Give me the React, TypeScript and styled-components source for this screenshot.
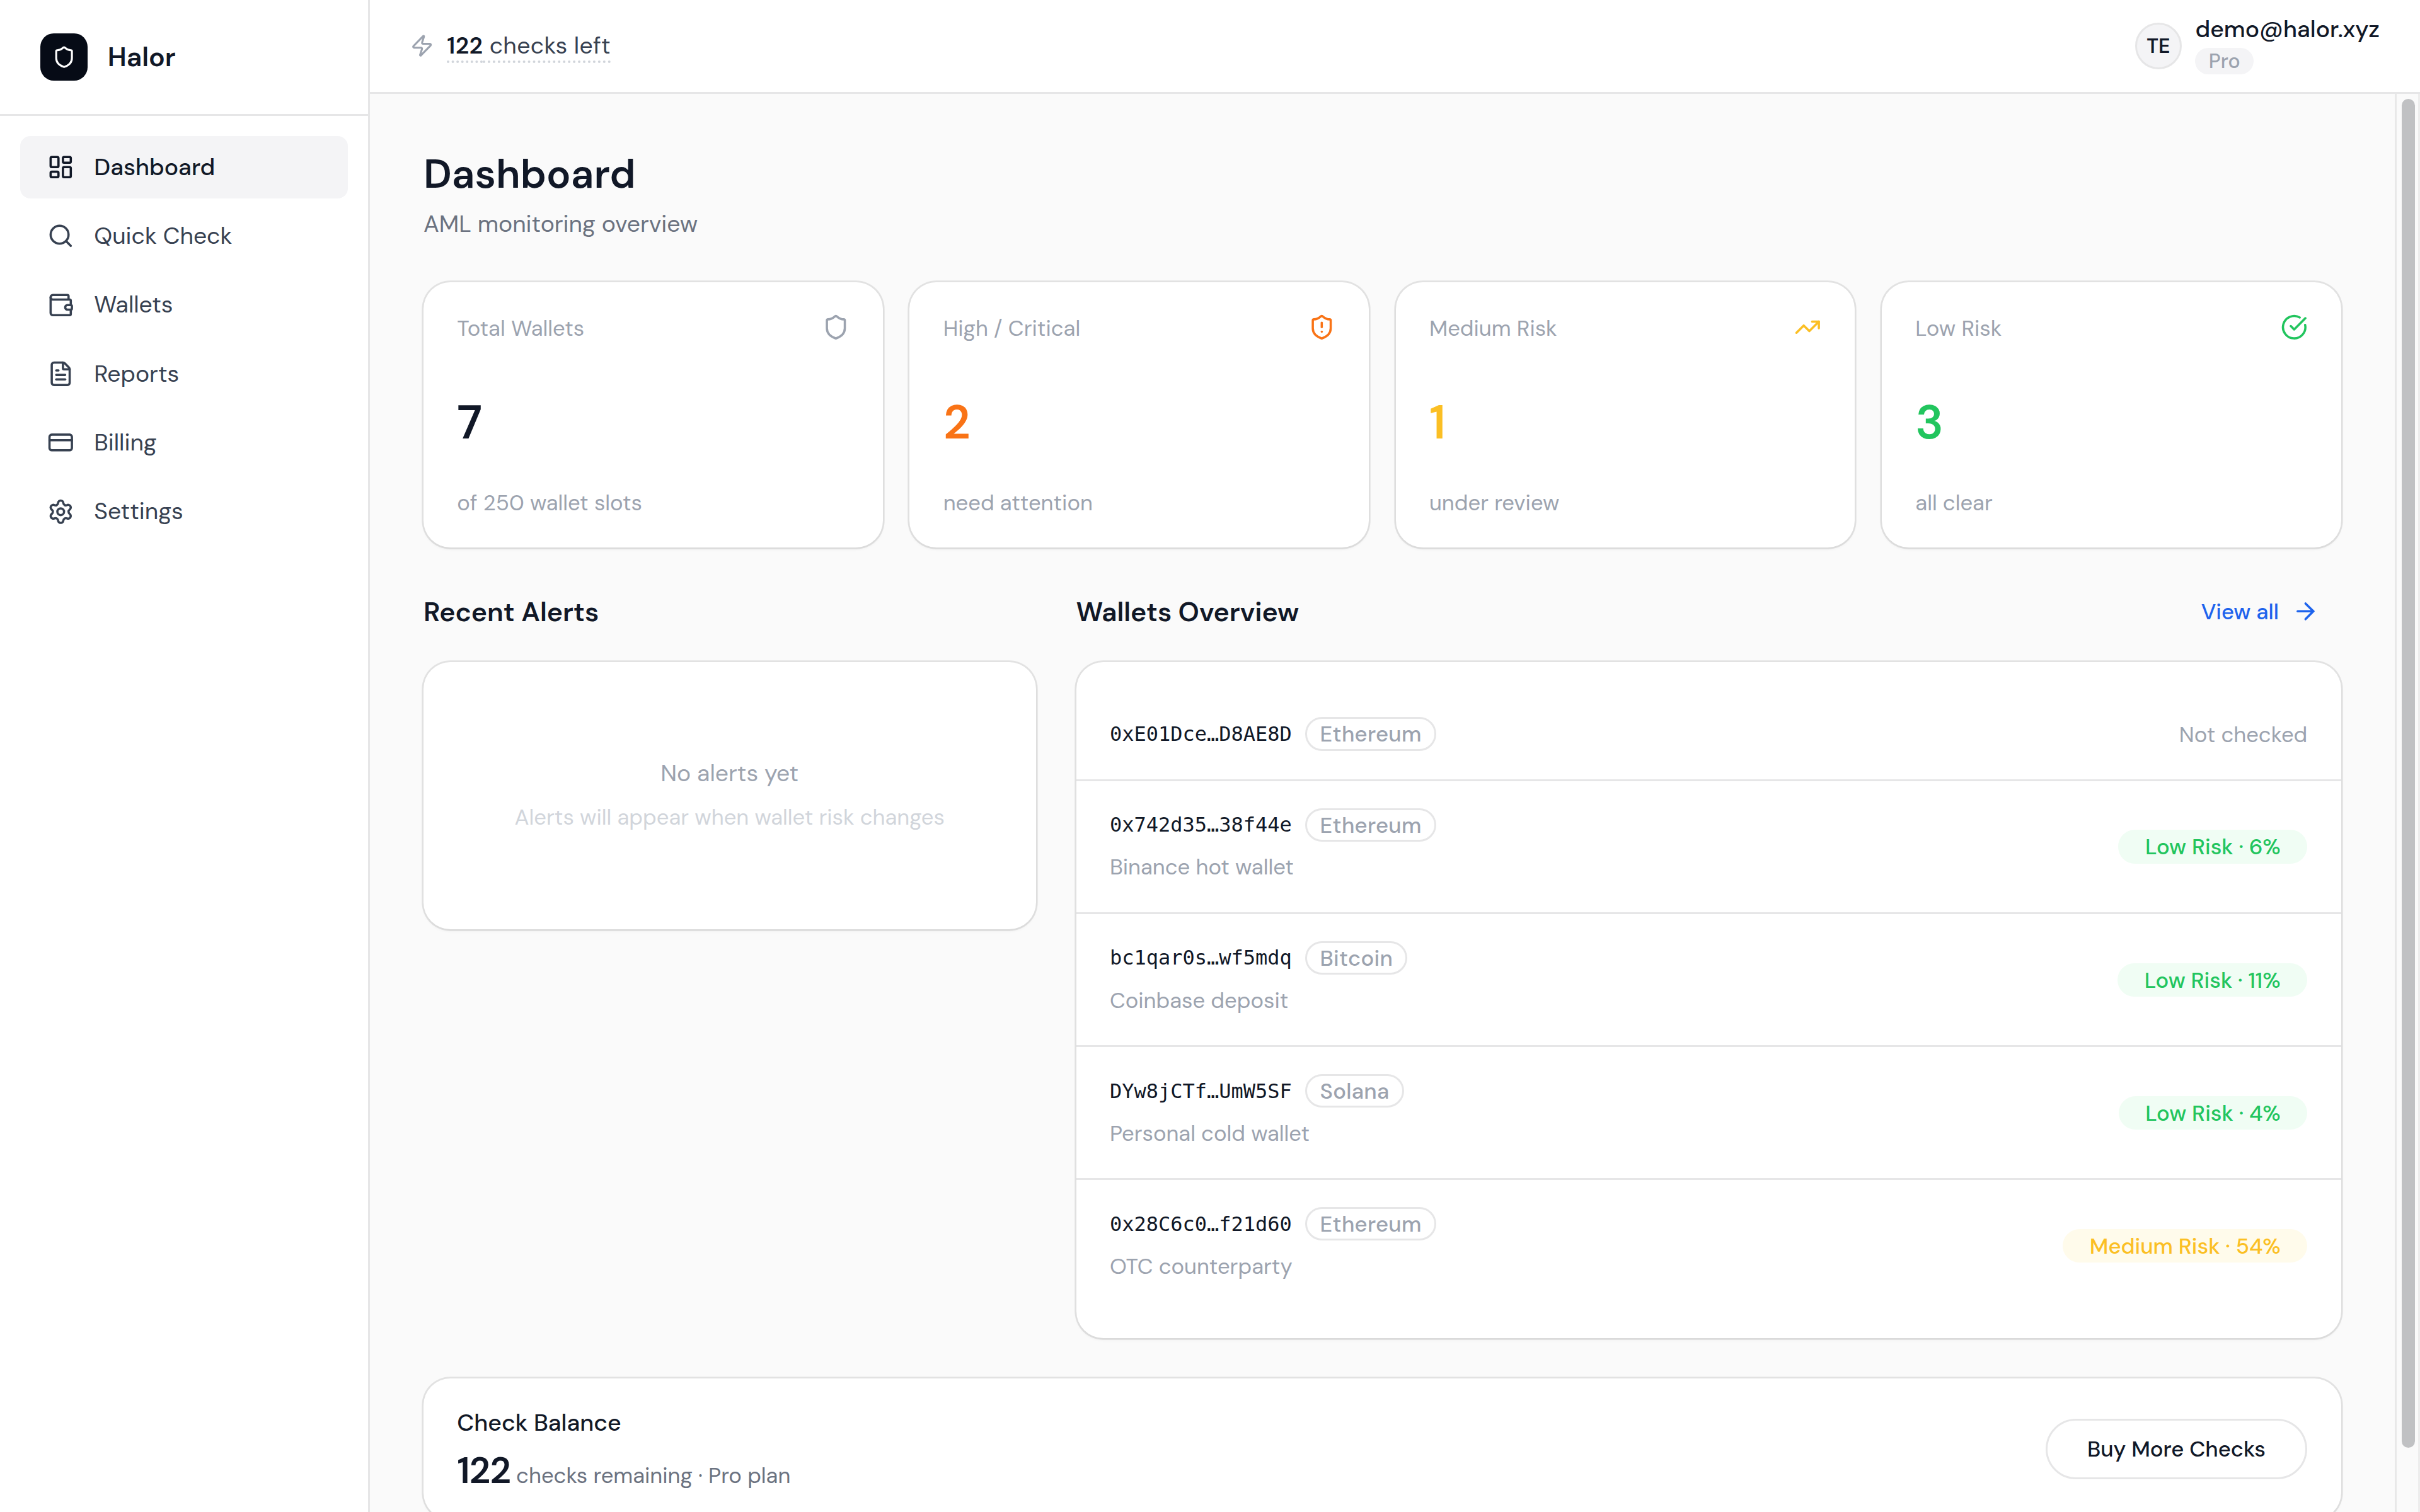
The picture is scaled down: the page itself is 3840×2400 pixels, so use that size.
import React from 'react';
import styled, { createGlobalStyle, css } from 'styled-components';
import {
  ArrowRight,
  CircleCheckBig,
  CreditCard,
  FileText,
  LayoutDashboard,
  Search,
  Settings,
  Shield,
  ShieldAlert,
  TrendingUp,
  Wallet,
  Zap,
} from 'lucide-react';

const ink = '#111827';
const body = '#374151';
const soft = '#6b7280';
const muted = '#9ca3af';
const faint = '#d1d5db';
const line = '#e6e6e7';
const fill = '#f4f4f6';

const GlobalStyle = createGlobalStyle`
  *, *::before, *::after { box-sizing: border-box; }
  body {
    margin: 0;
    background: #fff;
    color: ${ink};
    font-family: "DM Sans", Inter, sans-serif;
    overflow: hidden;
  }
  h1, h2, p { margin: 0; }
  button { font-family: inherit; }
  svg { display: block; flex: none; }
`;

const Shell = styled.div`
  display: flex;
  width: 3840px;
  height: 2400px;
  overflow: hidden;
`;

/* Sidebar */

const Sidebar = styled.aside`
  flex: none;
  width: 586.67px;
  background: #fff;
  border-right: 3px solid ${line};
`;

const Brand = styled.div`
  display: flex;
  align-items: center;
  gap: 32px;
  height: 184px;
  padding: 0 64px;
  border-bottom: 3px solid ${line};
  font-size: 42.67px;
  font-weight: 600;
`;

const BrandMark = styled.div`
  display: grid;
  place-items: center;
  width: 74.67px;
  height: 74.67px;
  border-radius: 21.33px;
  background: #060b16;
  color: #fff;
`;

const Nav = styled.nav`
  display: flex;
  flex-direction: column;
  gap: 10.67px;
  padding: 32px;
`;

const NavItem = styled.a<{ $active?: boolean }>`
  display: flex;
  align-items: center;
  gap: 32px;
  height: 98.67px;
  padding: 0 42.67px;
  border-radius: 16px;
  font-size: 37.33px;
  font-weight: 400;
  color: ${body};
  ${(p) =>
    p.$active &&
    css`
      background: ${fill};
      color: ${ink};
      font-weight: 500;
    `}
`;

/* Top bar */

const Workspace = styled.div`
  flex: 1;
  min-width: 0;
  display: flex;
  flex-direction: column;
  background: #fafafa;
`;

const TopBar = styled.header`
  flex: none;
  display: flex;
  align-items: center;
  justify-content: space-between;
  height: 149.33px;
  padding: 0 64px;
  background: #fff;
  border-bottom: 3px solid ${line};
`;

const Quota = styled.div`
  display: flex;
  align-items: center;
  gap: 21.33px;
  color: ${muted};
`;

const QuotaText = styled.span`
  font-size: 37.33px;
  letter-spacing: 0.34px;
  line-height: 56px;
  color: ${body};
  text-decoration: underline dotted ${faint};
  text-decoration-thickness: 4px;
  text-underline-offset: 10.67px;
  text-decoration-skip-ink: none;

  strong {
    font-weight: 600;
    color: ${ink};
  }
`;

const User = styled.div`
  display: flex;
  align-items: center;
  gap: 21.33px;
`;

const Avatar = styled.div`
  display: grid;
  place-items: center;
  width: 74.67px;
  height: 74.67px;
  border: 3px solid ${line};
  border-radius: 50%;
  background: ${fill};
  font-size: 32px;
  font-weight: 600;
`;

const UserInfo = styled.div`
  display: flex;
  flex-direction: column;
  align-items: flex-start;
  gap: 10.67px;
`;

const Email = styled.span`
  font-size: 37.33px;
  font-weight: 500;
  line-height: 37.33px;
`;

const PlanTag = styled.span`
  height: 42.67px;
  padding: 0 21.33px;
  border-radius: 21.33px;
  background: ${fill};
  color: ${muted};
  font-size: 32px;
  font-weight: 500;
  line-height: 43.5px;
`;

/* Scrolling region */

const Viewport = styled.div`
  flex: 1;
  min-height: 0;
  display: flex;
`;

const Content = styled.main`
  flex: 1;
  min-width: 0;
  overflow: hidden;
  padding: 85.33px 85.33px 0;
`;

const ScrollTrack = styled.div`
  flex: none;
  width: 40px;
  padding: 8px 5px 0 7.5px;
  border-left: 3px solid #e8e8e8;
  border-right: 3px solid #ededed;
  background: #fafafa;
`;

const ScrollThumb = styled.div`
  width: 21.5px;
  height: 2141px;
  border-radius: 11px;
  background: #c0c1c3;
`;

const PageTitle = styled.h1`
  font-size: 64px;
  font-weight: 600;
  line-height: 83.2px;
`;

const PageSubtitle = styled.p`
  margin: 10px 0 64.13px;
  font-size: 37.33px;
  line-height: 56px;
  color: ${soft};
`;

const Card = styled.section`
  border-radius: 42.67px;
  background: #fff;
  box-shadow:
    0 0 0 2.67px rgba(0, 0, 0, 0.09),
    0 2.67px 5.33px rgba(0, 0, 0, 0.05);
`;

/* Statistics */

const Stats = styled.div`
  display: grid;
  grid-template-columns: repeat(4, 1fr);
  gap: 42.67px;
`;

const StatCard = styled(Card)`
  height: 421.33px;
  padding: 53.33px;
`;

const StatHead = styled.div<{ $tone: string }>`
  display: flex;
  align-items: center;
  justify-content: space-between;
  height: 37px;
  color: ${(p) => p.$tone};
`;

const StatLabel = styled.span`
  padding-top: 2.5px;
  font-size: 34.67px;
  color: ${muted};
`;

const StatValue = styled.div<{ $tone: string }>`
  margin-top: 96px;
  font-size: 74.67px;
  font-weight: 600;
  line-height: 74.67px;
  color: ${(p) => p.$tone};
`;

const StatNote = styled.p`
  margin-top: 63.7px;
  font-size: 34.67px;
  line-height: 52px;
  color: ${muted};
`;

/* Alerts and wallets */

const Panels = styled.div`
  display: grid;
  grid-template-columns: repeat(3, 1fr);
  gap: 64px;
  align-items: start;
  margin: 64px 0;
`;

const Panel = styled.div<{ $span?: number }>`
  grid-column: span ${(p) => p.$span ?? 1};
`;

const PanelHead = styled.div`
  display: flex;
  align-items: center;
  justify-content: space-between;
  height: 74.67px;
  margin-bottom: 42.67px;
`;

const PanelTitle = styled.h2`
  padding-top: 2px;
  font-size: 42.67px;
  font-weight: 600;
`;

const ViewAll = styled.a`
  display: flex;
  align-items: center;
  gap: 21.33px;
  padding: 0 34.67px;
  font-size: 34.67px;
  font-weight: 500;
  color: #1d63ed;
`;

const ViewAllText = styled.span`
  padding-top: 2px;
`;

const EmptyCard = styled(Card)`
  display: flex;
  flex-direction: column;
  align-items: center;
  height: 424px;
  padding-top: 149.67px;
  gap: 15.3px;
`;

const EmptyTitle = styled.p`
  font-size: 37.33px;
  line-height: 56px;
  color: ${muted};
`;

const EmptyHint = styled.p`
  font-size: 34.67px;
  line-height: 52px;
  color: ${faint};
`;

const WalletCard = styled(Card)`
  padding: 42.67px 0 42px;
`;

const WalletRow = styled.div`
  display: flex;
  align-items: center;
  justify-content: space-between;
  padding: 42.67px 53.33px;

  &:not(:last-child) {
    border-bottom: 3px solid ${line};
  }
`;

const WalletInfo = styled.div<{ $labelled: boolean }>`
  display: flex;
  flex-direction: column;
  justify-content: ${(p) => (p.$labelled ? 'flex-start' : 'center')};
  gap: 15.5px;
  height: ${(p) => (p.$labelled ? 122.87 : 58.33)}px;
`;

const WalletLine = styled.div`
  display: flex;
  align-items: center;
  gap: 21.33px;
`;

const Address = styled.span`
  font-family: "DejaVu Sans Mono", monospace;
  font-size: 32px;
`;

const ChainTag = styled.span`
  height: 53.33px;
  padding: 0 20.33px;
  border: 3px solid ${line};
  border-radius: 26.67px;
  color: ${muted};
  font-size: 34.67px;
  font-weight: 500;
  line-height: 49px;
  letter-spacing: 0.3px;
`;

const WalletLabel = styled.span`
  font-size: 34.67px;
  line-height: 52px;
  color: ${muted};
`;

const Unchecked = styled.span`
  padding-top: 2px;
  font-size: 34.67px;
  color: ${muted};
`;

const riskTones = {
  low: { label: 'Low Risk', color: '#22c55e', background: '#f0fdf4' },
  medium: { label: 'Medium Risk', color: '#fbbf24', background: '#fffbeb' },
};

const RiskTag = styled.span<{ $level: keyof typeof riskTones }>`
  height: 53.33px;
  padding: 0 42.67px;
  border-radius: 26.67px;
  font-size: 34.67px;
  font-weight: 500;
  line-height: 55.5px;
  color: ${(p) => riskTones[p.$level].color};
  background: ${(p) => riskTones[p.$level].background};
`;

/* Balance */

const BalanceCard = styled(Card)`
  display: flex;
  align-items: center;
  justify-content: space-between;
  height: 224px;
  padding: 0 53.33px;
`;

const BalanceTitle = styled.p`
  padding-top: 2px;
  font-size: 37.33px;
  font-weight: 500;
  line-height: 56px;
`;

const BalanceLine = styled.p`
  height: 70.8px;
  margin-top: 12px;
  font-size: 34.67px;
  line-height: 70.8px;
  color: ${soft};

  strong {
    font-size: 58.67px;
    font-weight: 600;
    letter-spacing: -0.02em;
    color: ${ink};
  }
`;

const OutlineButton = styled.button`
  height: 96px;
  padding: 2px 63.33px 0;
  border: 3px solid ${line};
  border-radius: 48px;
  background: #fff;
  color: ${ink};
  font-size: 34.67px;
  font-weight: 500;
`;

const navItems = [
  { label: 'Dashboard', icon: LayoutDashboard },
  { label: 'Quick Check', icon: Search },
  { label: 'Wallets', icon: Wallet },
  { label: 'Reports', icon: FileText },
  { label: 'Billing', icon: CreditCard },
  { label: 'Settings', icon: Settings },
];

const stats = [
  { label: 'Total Wallets', value: 7, note: 'of 250 wallet slots', icon: Shield, iconTone: muted, tone: ink },
  { label: 'High / Critical', value: 2, note: 'need attention', icon: ShieldAlert, iconTone: '#f97316', tone: '#f97316' },
  { label: 'Medium Risk', value: 1, note: 'under review', icon: TrendingUp, iconTone: '#fbbf24', tone: '#fbbf24' },
  { label: 'Low Risk', value: 3, note: 'all clear', icon: CircleCheckBig, iconTone: '#22c55e', tone: '#22c55e' },
];

type WalletEntry = {
  address: string;
  chain: string;
  label?: string;
  risk?: { level: keyof typeof riskTones; score: number };
};

const wallets: WalletEntry[] = [
  { address: '0xE01Dce…D8AE8D', chain: 'Ethereum' },
  { address: '0x742d35…38f44e', chain: 'Ethereum', label: 'Binance hot wallet', risk: { level: 'low', score: 6 } },
  { address: 'bc1qar0s…wf5mdq', chain: 'Bitcoin', label: 'Coinbase deposit', risk: { level: 'low', score: 11 } },
  { address: 'DYw8jCTf…UmW5SF', chain: 'Solana', label: 'Personal cold wallet', risk: { level: 'low', score: 4 } },
  { address: '0x28C6c0…f21d60', chain: 'Ethereum', label: 'OTC counterparty', risk: { level: 'medium', score: 54 } },
];

export default function App() {
  return (
    <Shell>
      <GlobalStyle />
      <Sidebar>
        <Brand>
          <BrandMark>
            <Shield size={37.33} />
          </BrandMark>
          Halor
        </Brand>
        <Nav>
          {navItems.map(({ label, icon: Icon }, i) => (
            <NavItem key={label} $active={i === 0}>
              <Icon size={42.67} />
              {label}
            </NavItem>
          ))}
        </Nav>
      </Sidebar>

      <Workspace>
        <TopBar>
          <Quota>
            <Zap size={37.33} />
            <QuotaText>
              <strong>122</strong> checks left
            </QuotaText>
          </Quota>
          <User>
            <Avatar>TE</Avatar>
            <UserInfo>
              <Email>demo@halor.xyz</Email>
              <PlanTag>Pro</PlanTag>
            </UserInfo>
          </User>
        </TopBar>

        <Viewport>
          <Content>
            <PageTitle>Dashboard</PageTitle>
            <PageSubtitle>AML monitoring overview</PageSubtitle>

            <Stats>
              {stats.map(({ label, value, note, icon: Icon, iconTone, tone }) => (
                <StatCard key={label}>
                  <StatHead $tone={iconTone}>
                    <StatLabel>{label}</StatLabel>
                    <Icon size={42.67} />
                  </StatHead>
                  <StatValue $tone={tone}>{value}</StatValue>
                  <StatNote>{note}</StatNote>
                </StatCard>
              ))}
            </Stats>

            <Panels>
              <Panel>
                <PanelHead>
                  <PanelTitle>Recent Alerts</PanelTitle>
                </PanelHead>
                <EmptyCard>
                  <EmptyTitle>No alerts yet</EmptyTitle>
                  <EmptyHint>Alerts will appear when wallet risk changes</EmptyHint>
                </EmptyCard>
              </Panel>
              <Panel $span={2}>
                <PanelHead>
                  <PanelTitle>Wallets Overview</PanelTitle>
                  <ViewAll>
                    <ViewAllText>View all</ViewAllText>
                    <ArrowRight size={42.67} />
                  </ViewAll>
                </PanelHead>
                <WalletCard>
                  {wallets.map((w) => (
                    <WalletRow key={w.address}>
                      <WalletInfo $labelled={Boolean(w.label)}>
                        <WalletLine>
                          <Address>{w.address}</Address>
                          <ChainTag>{w.chain}</ChainTag>
                        </WalletLine>
                        {w.label && <WalletLabel>{w.label}</WalletLabel>}
                      </WalletInfo>
                      {w.risk ? (
                        <RiskTag $level={w.risk.level}>
                          {riskTones[w.risk.level].label} · {w.risk.score}%
                        </RiskTag>
                      ) : (
                        <Unchecked>Not checked</Unchecked>
                      )}
                    </WalletRow>
                  ))}
                </WalletCard>
              </Panel>
            </Panels>

            <BalanceCard>
              <div>
                <BalanceTitle>Check Balance</BalanceTitle>
                <BalanceLine>
                  <strong>122</strong> checks remaining · Pro plan
                </BalanceLine>
              </div>
              <OutlineButton>Buy More Checks</OutlineButton>
            </BalanceCard>
          </Content>
          <ScrollTrack>
            <ScrollThumb />
          </ScrollTrack>
        </Viewport>
      </Workspace>
    </Shell>
  );
}
